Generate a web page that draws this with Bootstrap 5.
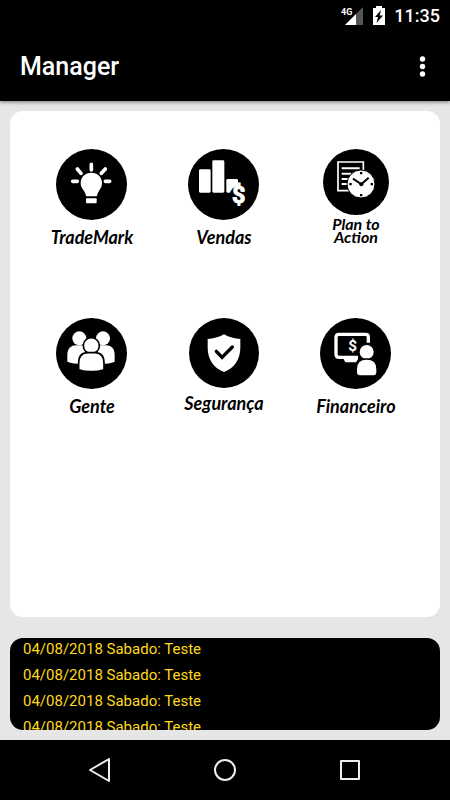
<!DOCTYPE html>
<html lang="pt-BR">
<head>
<meta charset="utf-8">
<meta name="viewport" content="width=device-width, initial-scale=1">
<title>Manager</title>
<link href="https://cdn.jsdelivr.net/npm/bootstrap@5.3.0/dist/css/bootstrap.min.css" rel="stylesheet">
<style>
body { font-family: Roboto, "Liberation Sans", sans-serif; background: #e6e6e6; }
svg { display: block; }
.status { height: 32px; padding-right: 10px; font-size: 18px; line-height: 32px; font-weight: 500; }
.app-header { position: relative; box-shadow: 0 1px 4px rgba(0, 0, 0, .5); }
.app-bar { height: 69px; padding: 0 16px 0 20px; }
.app-title { font-size: 25px; line-height: 32px; font-weight: 500; }
.plain-btn { background: none; border: 0; padding: 0; color: inherit; }
.screen { padding: 10px; gap: 21px; }
.panel { border-radius: 13px; }
.menu-panel { padding: 38px 18px 0 16px; }
.menu-grid { row-gap: 71px; }
.tile { font: italic 700 18px/20px Lato, Carlito, sans-serif; color: #000; gap: 7px; }
.tile-compact { font-size: 16px; line-height: 13px; gap: 2px; }
.tile-near { gap: 5px; }
.ticker { height: 92px; padding: 0 13px; overflow: hidden; color: #ffd91a; font-size: 15px; line-height: 22px; }
.nav-keys { height: 60px; padding: 0 37px; }
</style>
<script src="https://cdn.jsdelivr.net/npm/bootstrap@5.3.0/dist/js/bootstrap.bundle.min.js"></script>
</head>
<body class="d-flex flex-column min-vh-100">
<header class="app-header bg-black text-white">
  <div class="status d-flex justify-content-end align-items-center gap-2">
    <svg width="24" height="20" viewBox="0 0 24 20" role="img" aria-label="4G"><path d="M5 19 23 1V19Z" fill="#555"/><path d="M5 19 16 8V19Z" fill="#fff"/><text x="1" y="9" font-size="9" font-weight="700" fill="#fff" stroke="#000" stroke-width="2" paint-order="stroke">4G</text></svg>
    <svg width="14" height="20" viewBox="0 0 14 20" aria-hidden="true"><path d="M4 0h6v2h3v17H1V2h3z" fill="#fff"/><path d="M9 4 3 11h3L4.500 17 11 9.500H7.700z" fill="#000"/></svg>
    <span>11:35</span>
  </div>
  <div class="app-bar d-flex align-items-center justify-content-between">
    <h1 class="app-title m-0">Manager</h1>
    <button class="plain-btn" type="button" aria-label="Mais opções"><svg width="24" height="24" viewBox="0 0 24 24" fill="#fff"><circle cx="12.500" cy="4" r="2.700"/><circle cx="12.500" cy="11.500" r="2.700"/><circle cx="12.500" cy="19" r="2.700"/></svg></button>
  </div>
</header>

<main class="screen flex-grow-1 d-flex flex-column">
  <section class="panel menu-panel bg-white flex-grow-1">
    <div class="menu-grid row row-cols-3 g-0">
      <div class="col d-flex justify-content-center align-items-start">
        <button class="plain-btn tile d-flex flex-column align-items-center" type="button">
          <svg width="71" height="71" viewBox="51 26 213 213" aria-hidden="true"><circle cx="157.500" cy="132.500" r="106.500"/><g fill="#fff"><path d="M157 97c-19 0-32 14-32 31 0 13 7 19 12 27 3 5 3 13 6 13h29c3 0 3-8 6-13 5-8 11-14 11-27 0-17-13-31-32-31z"/><rect x="141" y="174" width="32" height="15" rx="3"/></g><path d="M157 72v17M115 86l11 13M199 86l-12 13M101 123h14M199 123h13" stroke="#fff" stroke-width="11" stroke-linecap="round"/></svg>
          <span>TradeMark</span>
        </button>
      </div>
      <div class="col d-flex justify-content-center align-items-start">
        <button class="plain-btn tile d-flex flex-column align-items-center" type="button">
          <svg width="71" height="71" viewBox="42 26 213 213" aria-hidden="true"><circle cx="148.500" cy="132.500" r="106.500"/><g fill="#fff"><rect x="75" y="87" width="35" height="70" rx="4"/><rect x="115" y="60" width="36" height="97" rx="4"/><rect x="157" y="116" width="35" height="41" rx="4"/></g><circle cx="194" cy="164" r="27"/><text x="194" y="189" text-anchor="middle" font-family="Roboto, sans-serif" font-style="normal" font-weight="700" font-size="70" fill="#fff" stroke="#fff" stroke-width="3">$</text></svg>
          <span>Vendas</span>
        </button>
      </div>
      <div class="col d-flex justify-content-center align-items-start">
        <button class="plain-btn tile tile-compact d-flex flex-column align-items-center" type="button">
          <svg width="66" height="66" viewBox="54 26 198 198" aria-hidden="true"><circle cx="153" cy="125" r="99"/><path d="M99 65h76v86H99z" fill="none" stroke="#fff" stroke-width="5"/><path d="M110 84h54M110 100h28M110 116h20M110 131h18" stroke="#fff" stroke-width="6"/><circle cx="168" cy="131" r="42" fill="#fff" stroke="#000" stroke-width="3"/><path d="M144 115l25 17 22-20" fill="none" stroke="#000" stroke-width="6"/><circle cx="169" cy="132" r="6"/><path d="M165 95h7v7h-7zM165 161h7v7h-7zM133 128h7v7h-7zM197 128h7v7h-7z"/></svg>
          <span>Plan to<br>Action</span>
        </button>
      </div>
      <div class="col d-flex justify-content-center align-items-start">
        <button class="plain-btn tile d-flex flex-column align-items-center" type="button">
          <svg width="71" height="71" viewBox="54 22 213 213" aria-hidden="true"><circle cx="160.500" cy="128.500" r="106.500"/><g fill="#fff"><circle cx="124" cy="83" r="21"/><circle cx="195" cy="83" r="21"/><path d="M88 153v-20c0-19 10-29 27-29h18c17 0 27 10 27 29v24c-25 5-55 3-72-4z"/><path d="M160 157v-24c0-19 10-29 27-29h16c17 0 27 10 27 29v20c-16 7-46 9-70 4z"/></g><g fill="#fff" stroke="#000" stroke-width="5"><circle cx="160" cy="105" r="24"/><path d="M122 177v-20c0-21 10-31 28-31h20c18 0 28 10 28 31v20c-22 8-54 8-76 0z"/></g></svg>
          <span>Gente</span>
        </button>
      </div>
      <div class="col d-flex justify-content-center align-items-start">
        <button class="plain-btn tile tile-near d-flex flex-column align-items-center" type="button">
          <svg width="70" height="70" viewBox="42 22 210 210" aria-hidden="true"><circle cx="147" cy="127" r="105"/><path d="M147 71c15 9 32 13 49 14v25c0 37-18 63-49 74-31-11-49-37-49-74V85c17-1 34-5 49-14z" fill="#fff"/><path d="M124 122l17 18 31-31" fill="none" stroke="#000" stroke-width="10" stroke-linecap="round"/></svg>
          <span>Segurança</span>
        </button>
      </div>
      <div class="col d-flex justify-content-center align-items-start">
        <button class="plain-btn tile d-flex flex-column align-items-center" type="button">
          <svg width="71" height="71" viewBox="47 22 213 213" aria-hidden="true"><circle cx="153.500" cy="128.500" r="106.500"/><path d="M192 96V79q0-8-8-8h-80q-9 0-9 9v51q0 9 9 9h57" fill="none" stroke="#fff" stroke-width="10"/><path d="M117 140h44v6l-6 9h-31q-7-7-7-15z" fill="#fff"/><text x="145" y="121" text-anchor="middle" font-family="Roboto, sans-serif" font-style="normal" font-weight="700" font-size="46" fill="#fff">$</text><g fill="#fff" stroke="#000" stroke-width="4"><circle cx="187" cy="124" r="23"/><path d="M167 196q-11 0-11-11v-10c0-20 12-30 31-30s31 10 31 30v10q0 11-11 11z"/></g></svg>
          <span>Financeiro</span>
        </button>
      </div>
    </div>
  </section>

  <section class="panel ticker bg-black d-flex flex-column gap-1" aria-label="Avisos">
    <div>04/08/2018 Sabado: Teste</div>
    <div>04/08/2018 Sabado: Teste</div>
    <div>04/08/2018 Sabado: Teste</div>
    <div>04/08/2018 Sabado: Teste</div>
  </section>
</main>

<nav class="nav-keys bg-black d-flex align-items-center justify-content-around" aria-label="Sistema">
  <button class="plain-btn" type="button" aria-label="Voltar"><svg width="24" height="24" viewBox="0 0 24 24" fill="none" stroke="#eee" stroke-width="2" stroke-linejoin="round"><path d="M21 1v22L2 12z"/></svg></button>
  <button class="plain-btn" type="button" aria-label="Início"><svg width="24" height="24" viewBox="0 0 24 24" fill="none" stroke="#eee" stroke-width="2"><circle cx="12" cy="12" r="10"/></svg></button>
  <button class="plain-btn" type="button" aria-label="Recentes"><svg width="24" height="24" viewBox="0 0 24 24" fill="none" stroke="#eee" stroke-width="2" stroke-linejoin="round"><path d="M3 3h18v18H3z"/></svg></button>
</nav>
</body>
</html>
